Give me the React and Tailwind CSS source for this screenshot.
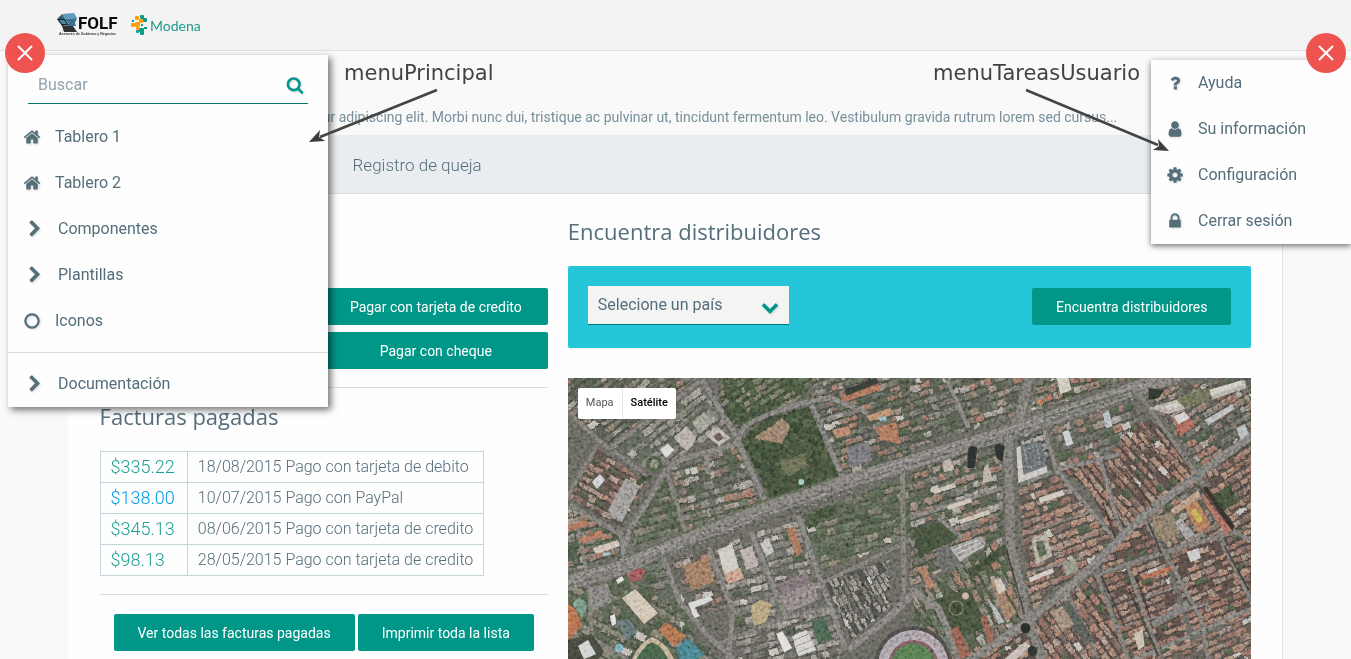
import React from 'react';

const ICONS = {
  home: 'M1472 992v480q0 26-19 45t-45 19h-384v-384h-256v384h-384q-26 0-45-19t-19-45v-480q0-1 .5-3t.5-3l575-474 575 474q1 2 1 6zm223-69l-62 74q-8 9-21 11h-3q-13 0-21-7l-692-577-692 577q-12 8-24 7-13-2-21-11l-62-74q-8-10-7-23.5t11-21.5l719-599q32-26 76-26t76 26l244 204v-195q0-14 9-23t23-9h192q14 0 23 9t9 23v408l219 182q10 8 11 21.5t-7 23.5z',
  search: 'M1216 832q0-185-131.5-316.5t-316.5-131.5-316.5 131.5-131.5 316.5 131.5 316.5 316.5 131.5 316.5-131.5 131.5-316.5zm512 832q0 52-38 90t-90 38q-54 0-90-38l-343-342q-179 124-399 124-143 0-273.5-55.5t-225-150-150-225-55.5-273.5 55.5-273.5 150-225 225-150 273.5-55.5 273.5 55.5 225 150 150 225 55.5 273.5q0 220-124 399l343 343q37 37 37 90z',
  right: 'M1363 877l-742 742q-19 19-45 19t-45-19l-166-166q-19-19-19-45t19-45l531-531-531-531q-19-19-19-45t19-45l166-166q19-19 45-19t45 19l742 742q19 19 19 45t-19 45z',
  down: 'M1683 808l-742 741q-19 19-45 19t-45-19l-742-741q-19-19-19-45.5t19-45.5l166-165q19-19 45-19t45 19l531 531 531-531q19-19 45-19t45 19l166 165q19 19 19 45.5t-19 45.5z',
  circle: 'M896 352q-148 0-273 73t-198 198-73 273 73 273 198 198 273 73 273-73 198-198 73-273-73-273-198-198-273-73zm768 544q0 209-103 385.5t-279.5 279.5-385.5 103-385.5-103-279.5-279.5-103-385.5 103-385.5 279.5-279.5 385.5-103 385.5 103 279.5 279.5 103 385.5z',
  question: 'M1088 1256v240q0 16-12 28t-28 12h-240q-16 0-28-12t-12-28v-240q0-16 12-28t28-12h240q16 0 28 12t12 28zm316-600q0 54-15.5 101t-35 76.5-55 59.5-57.5 43.5-61 35.5q-41 23-68.5 65t-27.5 67q0 17-12 32.5t-28 15.5h-240q-15 0-25.5-18.5t-10.5-37.5v-45q0-83 65-156.5t143-108.5q59-27 84-56t25-76q0-42-46.5-74t-107.5-32q-65 0-108 29-35 25-107 115-13 16-31 16-12 0-25-8l-164-125q-13-10-15.5-25t5.5-28q160-266 464-266 80 0 161 31t146 83 106 127.5 41 158.5z',
  user: 'M1536 1399q0 109-62.5 187t-150.5 78h-854q-88 0-150.5-78t-62.5-187q0-85 8.5-160.5t31.5-152 58.5-131 94-89 134.5-34.5q131 128 313 128t313-128q76 0 134.5 34.5t94 89 58.5 131 31.5 152 8.5 160.5zm-256-887q0 159-112.5 271.5t-271.5 112.5-271.5-112.5-112.5-271.5 112.5-271.5 271.5-112.5 271.5 112.5 112.5 271.5z',
  cog: 'M1152 896q0-106-75-181t-181-75-181 75-75 181 75 181 181 75 181-75 75-181zm512-109v222q0 12-8 23t-20 13l-185 28q-19 54-39 91 35 50 107 138 10 12 10 25t-9 23q-27 37-99 108t-94 71q-12 0-26-9l-138-108q-44 23-91 38-16 136-29 186-7 28-36 28h-222q-14 0-24.5-8.5t-11.5-21.5l-28-184q-49-16-90-37l-141 107q-10 9-25 9-14 0-25-11-126-114-165-168-7-10-7-23 0-12 8-23 15-21 51-66.5t54-70.5q-27-50-41-99l-183-27q-13-2-21-12.5t-8-23.5v-222q0-12 8-23t19-13l186-28q14-46 39-92-40-57-107-138-10-12-10-24 0-10 9-23 26-36 98.5-107.5t94.5-71.5q13 0 26 10l138 107q44-23 91-38 16-136 29-186 7-28 36-28h222q14 0 24.5 8.5t11.5 21.5l28 184q49 16 90 37l142-107q9-9 24-9 13 0 25 10 129 119 165 170 7 8 7 22 0 12-8 23-15 21-51 66.5t-54 70.5q26 50 41 98l183 28q13 2 21 12.5t8 23.5z',
  lock: 'M640 768h512v-192q0-106-75-181t-181-75-181 75-75 181v192zm832 96v576q0 40-28 68t-68 28h-960q-40 0-68-28t-28-68v-576q0-40 28-68t68-28h32v-192q0-184 132-316t316-132 316 132 132 316v192h32q40 0 68 28t28 68z',
};

function Icon({ name, className = '' }) {
  return (
    <svg viewBox="0 0 1792 1792" aria-hidden="true" className={`size-[18px] shrink-0 overflow-visible fill-current drop-shadow-[1px_1px_1px_rgba(0,0,0,0.15)] ${className}`}>
      <path d={ICONS[name]} />
    </svg>
  );
}

function Close({ label, className }) {
  return (
    <button type="button" aria-label={label} className={`absolute z-20 grid size-10 place-items-center rounded-full bg-[#ef5350] ${className}`}>
      <svg viewBox="0 0 16 16" className="size-4" stroke="#fff" strokeWidth="2">
        <path d="M1 1 15 15M15 1 1 15" />
      </svg>
    </button>
  );
}

function Button({ children, className = '' }) {
  return (
    <button type="button" className={`h-[37px] rounded-xs bg-[#009688] px-6 text-sm whitespace-nowrap text-white ${className}`}>
      {children}
    </button>
  );
}

/* ---------- Aerial map ---------- */

function seeded(seed) {
  let s = seed;
  return () => {
    s = (s * 1664525 + 1013904223) % 4294967296;
    return s / 4294967296;
  };
}

const ROOFS = ['#8a6355', '#7a5a4e', '#94705f', '#9a7362', '#6e574e', '#84695f', '#85756a', '#66554d', '#9c7e71'];
const GREYS = ['#77746e', '#65665f', '#86827a', '#706d66', '#55574f', '#8e877c', '#7a7874', '#9a958a', '#60635a'];
const MIXED = ['#786559', '#6c6a63', '#83756a', '#5d5f56', '#8a6455', '#565c4e', '#928b82', '#6c5d54', '#51554b'];
const TREES = ['#2f3e2c', '#384831', '#2a3724', '#3f4e36', '#334230', '#46533a', '#253222'];
const GREEN = ['#4a5540', '#41503a', '#576150', '#69665a', '#736e60', '#3c4935', '#5c5f50'];

/* points, rotation, row depth, palette, ground colour */
const BLOCKS = [
  ['0,0 130,0 40,68 0,32', -38, 7, MIXED, '#474b41'],
  ['46,70 132,8 160,50 100,85 80,92', -38, 8, GREYS, '#50554a'],
  ['30,70 78,104 52,150 2,120', 28, 7, ROOFS, '#4d443e'],
  ['0,128 50,158 52,176 0,196', -15, 8, MIXED, '#414c3c'],
  ['102,90 168,68 193,126 118,152', -15, 9, MIXED, '#4a5043'],
  ['64,150 98,98 114,152 66,168', -15, 8, GREEN, '#4e5345'],
  ['155,0 245,0 235,20 172,52 150,30', -30, 7, GREEN, '#39462f'],
  ['245,0 342,0 342,78 276,96 246,30', -18, 7, MIXED, '#454c3f'],
  ['60,190 96,182 130,250 60,240', -15, 9, GREEN, '#50554b'],
  ['0,212 60,198 92,220 150,281 0,281', 28, 10, GREEN, '#485143'],
  ['104,184 142,172 162,228 128,235', -15, 9, MIXED, '#524f48'],
  ['146,170 182,158 212,236 166,250', -15, 9, GREYS, '#55544e'],
  ['188,155 228,142 252,210 216,228', -15, 8, GREYS, '#595751'],
  ['234,138 342,96 342,160 254,192', -15, 8, GREEN, '#4e5545'],
  ['254,200 320,182 322,228 283,262', 62, 5, GREYS, '#41413c'],
  ['170,254 266,228 274,281 166,281', -15, 8, GREYS, '#55534d'],
  ['342,0 454,0 446,38 342,70', -18, 8, MIXED, '#464c3f'],
  ['342,96 432,62 436,158 342,210', -18, 9, MIXED, '#464e40'],
  ['470,0 565,0 462,34', -15, 9, MIXED, '#454e3c'],
  ['450,58 478,48 486,100 448,110', -20, 9, GREYS, '#474a43'],
  ['482,48 564,24 574,40 532,80 492,90', -18, 9, MIXED, '#50514a'],
  ['345,215 432,160 456,238 400,281 370,281 345,240', 62, 8, MIXED, '#434d39'],
  ['490,92 545,76 622,95 545,160 520,110', 52, 7, ROOFS, '#4a3f3a'],
  ['566,45 584,42 626,94 545,160 540,78', 48, 7, ROOFS, '#4b403a'],
  ['450,112 488,98 545,158 524,184 462,232', -20, 8, ROOFS, '#4d4741'],
  ['576,12 683,0 683,52 632,92', -32, 8, MIXED, '#4a4943'],
  ['632,98 683,62 683,150 666,152', -32, 8, ROOFS, '#49413b'],
  ['580,138 626,104 662,152 596,172', -30, 8, MIXED, '#4b4940'],
  ['532,186 575,142 592,172 534,192', -20, 7, ROOFS, '#493f39'],
  ['534,198 594,178 628,281 562,281', -22, 7, ROOFS, '#493e39'],
  ['598,176 646,158 683,218 683,240 625,252', -22, 7, ROOFS, '#493e39'],
  ['648,158 683,150 683,214', -22, 7, ROOFS, '#493e39'],
  ['470,236 528,196 560,281 452,281', 55, 8, ROOFS, '#4b433e'],
  ['402,281 458,246 462,281', -35, 7, ROOFS, '#484038'],
  ['582,281 683,236 683,281', -22, 7, ROOFS, '#534d47'],
];

const ROADS = [
  ['M-5 206 60 188 100 167 200 130 300 97 442 54 575 8 610-3', 14],
  ['M-5 124 53 156 58 190', 5],
  ['M56 172 62 150 78 126 98 92 112 82 168 66 175 50Q190 38 235 25L262 20 300 35', 5],
  ['M30 66-2 120M-4 30 30 62 80 98M40 72 134 2M90 88 160 22', 4],
  ['M170 64 200 130M243 27 275 102M138 76 140 96M134 2 168 58', 5],
  ['M98 92 118 156M10 150 20 200M20 200 24 260 60 281', 4],
  ['M95 180 112 224 140 258 166 281M140 170 165 232 160 281M183 154 217 237M230 138 250 195 278 272', 5],
  ['M160 236 260 202 334 166 342 160M150 266 215 240 262 230', 4],
  ['M280 272 320 240 342 218 350 212M342 212 370 230 392 281', 7],
  ['M334 90 336 225', 5],
  ['M378 0 400 50M342 140 434 110M370 140 394 160', 4],
  ['M462-3 452 36 440 60 442 164 459 242 475 281', 9],
  ['M400 283 459 244 529 184 575 137 629 97 688 54', 8],
  ['M567 12 629 97 666 154 690 166', 4],
  ['M476 52 488 92 520 84 552 76M532 82 548 140 556 160M488 92 545 160', 4],
  ['M529 196 590 176 666 154M595 172 632 240 640 281M559 187 592 281M528 196 560 281M649 154 688 235', 4],
  ['M560 284 625 256 688 228', 4],
  ['M576 140 594 174M452 240 498 214 530 280', 4],
  ['M456 156 520 134M458 195 515 180M544 230 620 205M545 250 640 226', 2],
];

function Tiles({ block, index }) {
  const [points, angle, depth, palette, ground] = block;
  const pts = points.split(' ').map((p) => p.split(',').map(Number));
  const xs = pts.map((p) => p[0]);
  const ys = pts.map((p) => p[1]);
  const cx = (Math.min(...xs) + Math.max(...xs)) / 2;
  const cy = (Math.min(...ys) + Math.max(...ys)) / 2;
  const radius = Math.hypot(Math.max(...xs) - cx, Math.max(...ys) - cy);
  const rand = seeded(index * 7919 + 13);
  const rects = [];
  for (let y = -radius; y < radius; y += depth) {
    let x = -radius;
    while (x < radius) {
      const w = 3 + rand() * 9;
      const skip = rand();
      if (skip > 0.12) {
        const h = depth * (0.5 + rand() * 0.35);
        const tone = palette[Math.floor(rand() * palette.length)];
        const fill = rand() > 0.975 ? '#b9b4ab' : rand() < 0.08 ? '#414d39' : tone;
        rects.push([x, y, w, h, fill]);
      }
      x += w + rand() * 1.6;
    }
  }
  return (
    <g clipPath={`url(#block-${index})`}>
      <clipPath id={`block-${index}`}>
        <polygon points={points} />
      </clipPath>
      <polygon points={points} fill={ground} />
      <g transform={`translate(${cx} ${cy}) rotate(${angle})`}>
        {rects.map(([x, y, w, h, fill], i) => (
          <React.Fragment key={i}>
            <rect x={x + 0.5} y={y + h} width={w} height="1.5" fill="#262722" opacity="0.5" />
            <rect x={x} y={y} width={w} height={h} fill={fill} />
            <rect x={x} y={y} width={w} height={h / 3} fill="#fff" opacity="0.07" />
          </React.Fragment>
        ))}
      </g>
    </g>
  );
}

function Grove({ points, id, count }) {
  const pts = points.split(' ').map((p) => p.split(',').map(Number));
  const xs = pts.map((p) => p[0]);
  const ys = pts.map((p) => p[1]);
  const x0 = Math.min(...xs);
  const y0 = Math.min(...ys);
  const w = Math.max(...xs) - x0;
  const h = Math.max(...ys) - y0;
  const rand = seeded(id.length * 4513 + count);
  const trees = Array.from({ length: count }, () => [x0 + rand() * w, y0 + rand() * h, 1 + rand() * 2.4, TREES[Math.floor(rand() * TREES.length)]]);
  return (
    <g clipPath={`url(#${id})`}>
      <clipPath id={id}>
        <polygon points={points} />
      </clipPath>
      <polygon points={points} fill="#38432e" />
      {trees.map(([x, y, r, fill], i) => (
        <circle key={i} cx={x} cy={y} r={r} fill={fill} />
      ))}
    </g>
  );
}

function AerialMap() {
  const rand = seeded(99);
  const cars = Array.from({ length: 300 }, () => {
    const x = rand() * 610;
    const y = 204 - x * 0.335 + (rand() - 0.5) * 12;
    return [x, y, rand() > 0.5 ? '#959390' : '#4b4d48'];
  });
  return (
    <svg viewBox="0 0 683 281" preserveAspectRatio="xMidYMid slice" role="img" aria-label="Vista de satélite" className="block h-[281px] w-full bg-[#56564f]">
      <defs>
        <filter id="grain" x="0" y="0" width="100%" height="100%">
          <feTurbulence type="fractalNoise" baseFrequency="0.32" numOctaves="3" seed="8" result="n" />
          <feColorMatrix in="n" type="matrix" values="1.6 0 0 0 -0.3  1.5 0.1 0 0 -0.3  1.4 0.2 0 0 -0.3  0 0 0 0 1" />
        </filter>
        <filter id="warp" x="0" y="0" width="100%" height="100%">
          <feTurbulence type="fractalNoise" baseFrequency="0.2" numOctaves="2" seed="4" />
          <feDisplacementMap in="SourceGraphic" scale="4" xChannelSelector="R" yChannelSelector="G" />
        </filter>
      </defs>
      <g filter="url(#warp)">
        <rect width="683" height="281" fill="#56564f" />
        {BLOCKS.map((b, i) => (
          <Tiles key={i} block={b} index={i} />
        ))}
        <Grove id="park" points="173,60 200,40 243,28 272,97 202,122" count={520} />
        <Grove id="park-north" points="158,14 180,34 215,18 205,40 176,52 150,30" count={150} />
        <Grove id="avenue-edge" points="236,140 262,128 270,134 240,152" count={60} />
        <Grove id="trees-mid" points="50,118 80,94 84,100 70,108" count={30} />
        <Grove id="lawn-a" points="345,150 380,142 390,160 350,180" count={50} />
        <Grove id="lawn-b" points="366,222 400,210 418,250 385,262" count={60} />
        <Grove id="lawn-c" points="400,192 436,166 440,174 402,202" count={60} />
        <Grove id="lawn-d" points="640,120 660,106 672,124 650,134" count={30} />
        <path d="M186 60 214 40 222 48 214 66Z" fill="#86705c" />
        <path d="M210 84 236 76 240 88 220 98Z" fill="#5a5d44" />
      </g>
      {ROADS.map(([d, w], i) => (
        <path key={i} d={d} fill="none" stroke={i % 2 ? '#6b6964' : '#706e6a'} strokeWidth={w} strokeLinejoin="round" />
      ))}
      <path d="M60 178 130 149 200 122 262 102" fill="none" stroke="#4f5945" strokeWidth="2" />
      <path d="M0 208 60 191 120 165 200 134 300 100 440 57 575 12" fill="none" stroke="#55564f" strokeWidth="1.2" strokeDasharray="14 3" />
      <path d="M0 202 60 184 120 158M300 94 440 51 575 5" fill="none" stroke="#85827c" strokeWidth="1" />
      <path d="M475 40 560 14" stroke="#4a5843" strokeWidth="2" />
      {cars.map(([x, y, fill], i) => (
        <rect key={i} x={x} y={y} width="2" height="1" fill={fill} transform={`rotate(-18 ${x} ${y})`} />
      ))}

      {/* courtyards and landmarks of the west side */}
      <path d="M106 60 118 48 128 60 124 68 118 73Z" fill="#aba294" />
      <path d="M124 44 136 34 144 44 132 56Z" fill="#8f9080" />
      <path d="M139 58 150 49 162 60 151 68Z" fill="#b5aca1" />
      <path d="M145 58 151 54 156 60 150 64Z" fill="#5d5049" />
      <path d="M92 72 100 66 106 72 98 80Z" fill="#d9d9d6" />
      <circle cx="86" cy="86" r="8" fill="#3c4d34" />
      <circle cx="86" cy="86" r="4.5" fill="#77766f" />
      <path d="M24 104 32 96 37 102 29 111Z" fill="#cdced0" />
      <path d="M40 132 58 100 72 108 54 144 44 140Z" fill="#898883" />
      <path d="M11 161 33 152 36 158 14 166Z" fill="#a56650" />
      <path d="M25 170 50 162 52 168 28 176Z" fill="#cbb5ab" />
      <path d="M0 148 18 141 20 147 0 154Z" fill="#9b634e" />
      <circle cx="233" cy="104" r="3" fill="#84c4ab" />
      <path d="M34 176 42 174 42 177 36 178Z" fill="#6bb8cc" />
      <path d="M150 172 164 166 172 194 160 204 154 190Z" fill="#cbc5bc" />
      <path d="M172 172 184 168 190 188 178 192Z" fill="#ada099" />
      <path d="M156 196 172 190 176 200 160 206Z" fill="#bf9179" />
      <path d="M192 166 200 160 206 174 198 178Z" fill="#b9bbb8" />
      <path d="M218 152 226 148 234 174 228 178Z" fill="#98644a" />
      <path d="M212 218 246 204 250 222 220 234Z" fill="#7b7472" />
      <path d="M210 206 238 194 244 204 214 216Z" fill="#6d6265" />
      <path d="M114 188 140 180 146 204 124 212Z" fill="#8d6a52" />
      <path d="M60 196 70 190 78 192 72 202 62 204Z" fill="#8e4a4a" />
      <path d="M48 202 54 198 56 202 50 206Z" fill="#e5e2dd" />
      <path d="M52 220 68 210 92 236 76 248Z" fill="#484a42" />
      <path d="M54 220 67 211 90 235 76 246Z" fill="#cdbfa8" />
      <path d="M18 210 40 206 44 224 24 234Z" fill="#716f6d" />
      <path d="M0 226 8 232 14 248 0 262Z" fill="#a9603e" />
      <path d="M12 218 20 228 14 240 4 226Z" fill="#65816f" />
      <path d="M90 252 98 244 118 258 106 268Z" fill="#a1613f" />
      <path d="M108 270 120 260 136 276 130 281 112 281Z" fill="#38707a" />
      <path d="M64 281Q72 264 84 259Q98 264 106 281Z" fill="#b6a283" />
      <path d="M68 281Q76 268 84 264Q94 268 100 281Z" fill="#36523a" />
      <path d="M0 262 24 256 36 274 30 281 0 281Z" fill="#35392f" />
      <path d="M10 268 20 262 28 276 16 281Z" fill="#d0d0cd" />
      <path d="M42 238 47 236 48 246 44 248Z" fill="#e6e6e2" />
      <circle cx="51" cy="270" r="4" fill="#6aa5bd" />
      <path d="M48 244 60 240 70 254 58 262Z" fill="#536264" />
      <path d="M120 225 142 218 145 222 126 230 132 238 126 240Z" fill="#d8d8d3" />
      <path d="M208 256 214 253 224 270 216 274Z" fill="#e4e3df" />
      <path d="M224 258 238 252 248 272 230 278Z" fill="#d3d2cd" />
      <path d="M226 262 240 256M228 268 243 262M230 274 246 268" stroke="#77756f" strokeWidth="1" />
      <path d="M244 244 256 238 264 260 250 266Z" fill="#3a5541" />
      <path d="M182 228 192 222 204 226 198 244 186 248Z" fill="#a9916b" />
      <path d="M272 18 310 6 312 12 276 24Z" fill="#9c6249" />
      <path d="M298 38 322 30 325 36 302 43Z" fill="#b07b60" />
      <path d="M306 50 328 44 332 66 314 62Z" fill="#9a654c" />
      <path d="M310 40 318 38 318 42 312 43Z" fill="#84b7c4" />
      <path d="M276 12 308 0 310 5 278 18Z" fill="#262c25" />
      <path d="M264 52 280 48 284 56 268 60Z" fill="#a7715a" />
      <path d="M278 70 300 64 304 82 282 90Z" fill="#66646a" />

      {/* stadium */}
      <circle cx="345" cy="287" r="39" fill="#3c3c3a" />
      <circle cx="345" cy="287" r="35" fill="#a0969a" />
      <circle cx="345" cy="287" r="31" fill="none" stroke="#8d8492" strokeWidth="3" strokeDasharray="3 1" />
      <circle cx="345" cy="287" r="25" fill="#6a4a4e" />
      <path d="M324 281Q328 268 345 265Q362 268 366 281Z" fill="#456b41" />

      {/* landmarks of the east side */}
      <path d="M488 0 500 0 503 12 492 16Z" fill="#cbc5b4" />
      <circle cx="472" cy="24" r="3" fill="#b8694e" />
      <circle cx="480" cy="20" r="3" fill="#a8614b" />
      <path d="M400 70Q404 66 409 70L406 90 399 90ZM426 68Q430 64 436 68L434 84 428 80Z" fill="#1b211f" />
      <path d="M449 68 472 62 480 92 450 104Z" fill="#585e60" />
      <path d="M448 70 452 68 455 97 478 88 479 94 450 105Z" fill="#c4c2bb" />
      <path d="M456 72 468 68 472 86 460 90Z" fill="none" stroke="#8b9291" strokeWidth="1" strokeDasharray="2 2" />
      <path d="M494 54 500 52 505 66 498 68Z" fill="#c6cacb" />
      <path d="M534 36 540 32 544 48 538 50Z" fill="#aab5bd" />
      <path d="M580 30 676 2 678 10 600 36Z" fill="#aaa396" />
      <path d="M596 28 628 18 640 12 672 3 674 7 600 32Z" fill="#cbc8c0" />
      <path d="M606 20 640 10 644 22 616 30Z" fill="#5d6048" />
      <path d="M604 40 618 34 626 48 612 58Z" fill="#a05a4c" />
      <path d="M605 38 616 34 621 40 610 46Z" fill="#cdcfd0" />
      <path d="M580 10 596 12 590 20 580 22Z" fill="#1f271f" />
      <path d="M636 42 664 26 666 31 640 47Z" fill="#b1b3b5" />
      <path d="M668 50 676 46 680 56 672 62Z" fill="#aeb2b2" />
      <path d="M602 132 630 112 632 118 606 137Z" fill="#b28b77" />
      <path d="M616 130 628 122 642 146 630 156Z" fill="#a36c4c" />
      <path d="M622 134 627 130 634 142 630 145Z" fill="#c5aa48" />
      <path d="M606 144 612 140 626 156 618 162Z" fill="#918f90" />
      <path d="M632 118 638 116 664 150 658 158Z" fill="#995f51" />
      <path d="M634 110 638 108 666 148 664 153Z" fill="#24221e" />
      <path d="M584 140 604 134 610 158 596 164 586 158Z" fill="#786b59" />
      <path d="M376 172 412 158 418 166 392 184Z" fill="#8e8c86" />
      <path d="M380 174 410 162M384 178 412 165M388 182 416 168" stroke="#c6c6c2" strokeWidth="1.2" />
      <path d="M368 170 380 168 392 184 380 196 368 186Z" fill="#595a58" />
      <path d="M350 190 357 188 366 208 360 212Z" fill="#9c6a54" />
      <path d="M416 88 420 86 424 102 414 106ZM374 84 382 80 386 92 376 94Z" fill="#ada597" />
      <path d="M422 206 430 198 440 222 448 234 438 244Z" fill="#8a6c58" />
      <path d="M426 202 432 200 438 212 430 216Z" fill="#c9bdae" />
      <path d="M420 222 428 230 436 244 430 246Z" fill="#a3a7aa" />
      <path d="M463 160 478 156 484 178 468 186Z" fill="#a89d8e" />
      <path d="M467 164 474 162 479 176 471 180Z" fill="#4c5843" />
      <path d="M494 184 506 180 510 192 498 198Z" fill="#7d8273" />
      <path d="M470 120 494 112 496 117 472 125ZM460 200 484 190 486 194 462 204Z" fill="#cbc5bb" />
      <path d="M378 128 402 120 404 124 380 132ZM390 142 420 132 422 136 392 146ZM364 112 386 105 388 109 366 116Z" fill="#c8bbab" />
      <path d="M412 240 418 236 426 262 420 266ZM382 252 390 248 402 276 392 281Z" fill="#7d5142" />
      <circle cx="388" cy="230" r="7" fill="none" stroke="#77765f" strokeWidth="1" />
      <circle cx="397" cy="218" r="3.5" fill="#c2a894" />
      <circle cx="457" cy="250" r="5" fill="#191d19" />
      <circle cx="464" cy="273" r="5" fill="#20251f" />
      <path d="M436 281 456 264 462 268 448 281Z" fill="#bdb3ad" />
      <path d="M484 230 500 222 526 262 518 266Z" fill="#484d47" />
      <path d="M482 234 494 228 506 246 494 254Z" fill="#8a7668" />
      <path d="M565 256 574 252 576 268 570 272Z" fill="#c4b5a3" />
      <path d="M618 174 630 170 632 180 622 184Z" fill="#c7c6c2" />
      <path d="M572 198 602 188 604 192 574 202Z" fill="#a35a43" />
      <path d="M582 244 618 222 622 230 586 250Z" fill="#6c6a68" />

      {/* building shadows along the eastern streets */}
      <path d="M580 145 593 176M533 198 556 248M438 172 456 236M567 198 582 240M656 168 680 212M534 124 547 160M630 108 664 152M560 210 590 278" fill="none" stroke="#1e201c" strokeWidth="2" opacity="0.65" />
      <path d="M576 58 604 100M590 48 622 92M556 90 584 130" fill="none" stroke="#2b2420" strokeWidth="1.6" opacity="0.6" />

      <rect width="683" height="281" filter="url(#grain)" className="opacity-45 mix-blend-overlay" />
      <rect width="683" height="281" fill="#b0aaa2" opacity="0.1" />
      <g fill="#fff" opacity="0.14" fontFamily="Liberation Sans, sans-serif" fontSize="15">
        <text x="378" y="35">©2015 Google</text>
        <text x="24" y="176">©2015 Google</text>
        <text x="204" y="240">©2015 Google</text>
        <text x="418" y="216">©2015 Google</text>
      </g>
    </svg>
  );
}

/* ---------- Page ---------- */

const PAYMENTS = [
  ['$335.22', '18/08/2015 Pago con tarjeta de debito', 'text-[#1ea193]'],
  ['$138.00', '10/07/2015 Pago con PayPal', 'text-[#039be5]'],
  ['$345.13', '08/06/2015 Pago con tarjeta de credito', 'text-[#1ea193]'],
  ['$98.13', '28/05/2015 Pago con tarjeta de credito', 'text-[#1ea193]'],
];

function MenuItem({ icon, children }) {
  const spacing = icon === 'right' ? 'pl-[18px]' : 'pl-[15px]';
  return (
    <li>
      <a href="#" className={`flex h-[46px] items-center gap-[14px] ${spacing}`}>
        <Icon name={icon} />
        {children}
      </a>
    </li>
  );
}

function MainMenu() {
  return (
    <nav aria-label="Menú principal" className="absolute top-[55px] left-2 z-10 w-80 bg-[#fefefe] shadow-[3px_3px_7px_rgba(0,0,0,0.55)]">
      <form className="mx-5 mt-2 mb-[10px] flex h-[41px] items-center border-b border-[#00796b] pt-1">
        <input aria-label="Buscar" placeholder="Buscar" className="min-w-0 flex-1 px-[10px] outline-none placeholder:text-[#90a4ae]" />
        <button type="button" aria-label="Buscar" className="mr-1 text-[#009688]">
          <Icon name="search" />
        </button>
      </form>
      <ul>
        <MenuItem icon="home">Tablero 1</MenuItem>
        <MenuItem icon="home">Tablero 2</MenuItem>
        <MenuItem icon="right">Componentes</MenuItem>
        <MenuItem icon="right">Plantillas</MenuItem>
        <MenuItem icon="circle">Iconos</MenuItem>
      </ul>
      <ul className="mt-2 border-t border-[#dddddd] pt-2">
        <MenuItem icon="right">Documentación</MenuItem>
      </ul>
    </nav>
  );
}

function UserMenu() {
  return (
    <nav aria-label="Menú de tareas de usuario" className="absolute top-[60px] right-0 z-10 w-[200px] bg-[#fefefe] shadow-[0_2px_6px_rgba(0,0,0,0.55)]">
      <ul>
        <MenuItem icon="question">Ayuda</MenuItem>
        <MenuItem icon="user">Su información</MenuItem>
        <MenuItem icon="cog">Configuración</MenuItem>
        <MenuItem icon="lock">Cerrar sesión</MenuItem>
      </ul>
    </nav>
  );
}

function Logos() {
  return (
    <div className="flex items-center gap-[13px] pt-3 pl-[57px]">
      <svg viewBox="0 0 61 26" role="img" aria-label="FOLF Asesores de Gobierno y Negocios" className="h-[26px] w-[61px] overflow-visible">
        <path d="M5 2 17 1 20 6 8 7Z" fill="#5f9dba" />
        <path d="M5 2 0 7 8 7Z" fill="#3c6177" />
        <path d="M0 7 8 7 12 13 5 14Z" fill="#16222a" />
        <path d="M8 7 20 6 18 11 19 14 9 14 12 12Z" fill="#3b7190" />
        <path d="M5 14 16 14 20 20 7 20Z" fill="#2f3335" />
        <path d="M2 8 7 8 10 12 5 12Z" fill="#4b87a4" />
        <text x="21" y="17" fontFamily="Roboto, sans-serif" fontWeight="700" fontSize="17" fill="#0b0b0b">FOLF</text>
        <text x="2" y="23" fontFamily="Liberation Sans, sans-serif" fontWeight="700" fontSize="3.5" fill="#333">Asesores de Gobierno y Negocios</text>
      </svg>
      <svg viewBox="0 0 70 22" role="img" aria-label="Modena" className="h-[22px] w-[70px] overflow-visible">
        <g fill="#ff9f0f">
          <rect x="4" y="2" width="4" height="4" rx="1" />
          <rect x="8" y="5" width="4" height="4" rx="1" />
          <rect x="0" y="9" width="4" height="4" rx="1" />
          <rect x="4" y="8" width="5" height="5" rx="1" />
          <rect x="5" y="13" width="3" height="3" rx="1" />
        </g>
        <g fill="#0a9c8c">
          <rect x="9" y="1" width="4" height="4" rx="1" />
          <rect x="12" y="4" width="4" height="4" rx="1" />
          <rect x="1" y="6" width="2" height="2" />
          <rect x="10" y="10" width="2" height="2" />
          <rect x="5" y="16" width="3" height="3" rx="1" />
          <rect x="8" y="14" width="5" height="4" rx="1" />
          <rect x="9" y="17" width="4" height="4" rx="1" />
          <rect x="13" y="13" width="3" height="2" />
        </g>
        <text x="19" y="17" fontFamily="Lato, sans-serif" fontSize="14" fill="#1a9c8c">Modena</text>
      </svg>
    </div>
  );
}

function Annotations() {
  return (
    <div className="pointer-events-none font-['DejaVu_Sans',sans-serif] text-[21px] text-[#424242]">
      <span className="absolute top-[58px] left-[344px] z-20">menuPrincipal</span>
      <span className="absolute top-[58px] right-[211px] z-20">menuTareasUsuario</span>
      <svg viewBox="0 0 130 56" className="absolute top-[88px] left-[308px] z-20 h-14 w-[130px]">
        <path d="M129 2 12 49" stroke="#444" strokeWidth="2.6" />
        <path d="M1 54 12 42 11 49 17 53Z" fill="#3d3d3d" />
      </svg>
      <svg viewBox="0 0 145 66" className="absolute top-[88px] right-[181px] z-20 h-[66px] w-[145px]">
        <path d="M1 2 133 57" stroke="#444" strokeWidth="2.6" />
        <path d="M144 63 128 62 134 58 133 51Z" fill="#3d3d3d" />
      </svg>
    </div>
  );
}

export default function App() {
  return (
    <div className="relative min-h-screen overflow-hidden bg-[#f9f9f9] font-['Roboto',sans-serif] text-base text-[#546e7a]">
      <header className="h-[51px] border-b border-[#e0e0e0] bg-[#f3f3f3]">
        <Logos />
      </header>
      <Close label="Cerrar menú principal" className="top-[33px] left-[5px]" />
      <Close label="Cerrar menú de usuario" className="top-[33px] right-[5px]" />
      <MainMenu />
      <UserMenu />
      <Annotations />

      <main className="mx-[5%]">
        <p className="overflow-hidden px-4 pt-14 pb-2 text-sm leading-5 whitespace-nowrap text-[#78909c]">
          Lorem ipsum dolor sit amet, consectetur adipiscing elit. Morbi nunc dui, tristique ac pulvinar ut, tincidunt fermentum leo. Vestibulum gravida rutrum lorem sed cursus...
        </p>
        <div className="border-r border-[#e3e3e3] bg-[#fefefe]">
          <div className="flex h-[59px] items-center border-b border-[#dadfe2] bg-[#e9edf0] pt-[3px] pl-[285px] text-[17px] font-light">
            <a href="#">Registro de queja</a>
          </div>
          <div className="grid grid-cols-[40fr_61fr] gap-5 pr-[31px] pl-8">
            <section className="flex flex-col pt-[94px]">
              <Button className="w-[224px] self-end">Pagar con tarjeta de credito</Button>
              <Button className="mt-[7px] w-[224px] self-end">Pagar con cheque</Button>
              <hr className="mt-[18px] border-[#dddddd]" />
              <h2 className="mt-3 font-['Open_Sans',sans-serif] text-[22px] leading-8">Facturas pagadas</h2>
              <table className="mt-[19px] self-start border-collapse font-light">
                <tbody>
                  {PAYMENTS.map(([amount, detail, tone]) => (
                    <tr key={amount} className="h-[31px]">
                      <td className={`border border-[#c3d3da] pr-3 pl-[10px] text-lg leading-[30px] ${tone}`}>{amount}</td>
                      <td className="border border-[#c3d3da] px-[10px] leading-[30px]">{detail}</td>
                    </tr>
                  ))}
                </tbody>
              </table>
              <hr className="mt-[18px] border-[#dddddd]" />
              <div className="mt-[19px] flex justify-center gap-[3px] pb-2">
                <Button>Ver todas las facturas pagadas</Button>
                <Button>Imprimir toda la lista</Button>
              </div>
            </section>

            <section className="pt-[21px]">
              <h2 className="font-['Open_Sans',sans-serif] text-[22px] leading-8">Encuentra distribuidores</h2>
              <div className="mt-[19px] flex h-[82px] items-start justify-between rounded-xs bg-[#26c6da] px-5 py-5 shadow-xs">
                <div className="relative">
                  <select aria-label="País" className="h-[39px] w-[201px] appearance-none border-b border-[#00796b] bg-[#f4f4f4] px-[10px]">
                    <option>Selecione un país</option>
                  </select>
                  <Icon name="down" className="pointer-events-none absolute top-3 right-[10px] text-[#009688]" />
                </div>
                <Button className="mt-[2px]">Encuentra distribuidores</Button>
              </div>
              <div className="relative mt-[30px]">
                <AerialMap />
                <div className="absolute top-[10px] left-[10px] flex h-[31px] items-stretch rounded-xs bg-white text-[11px] shadow-sm">
                  <button type="button" className="border-r border-[#e6e6e6] px-2 text-[#565656]">Mapa</button>
                  <button type="button" className="px-2 font-medium text-black">Satélite</button>
                </div>
              </div>
            </section>
          </div>
        </div>
      </main>
    </div>
  );
}
